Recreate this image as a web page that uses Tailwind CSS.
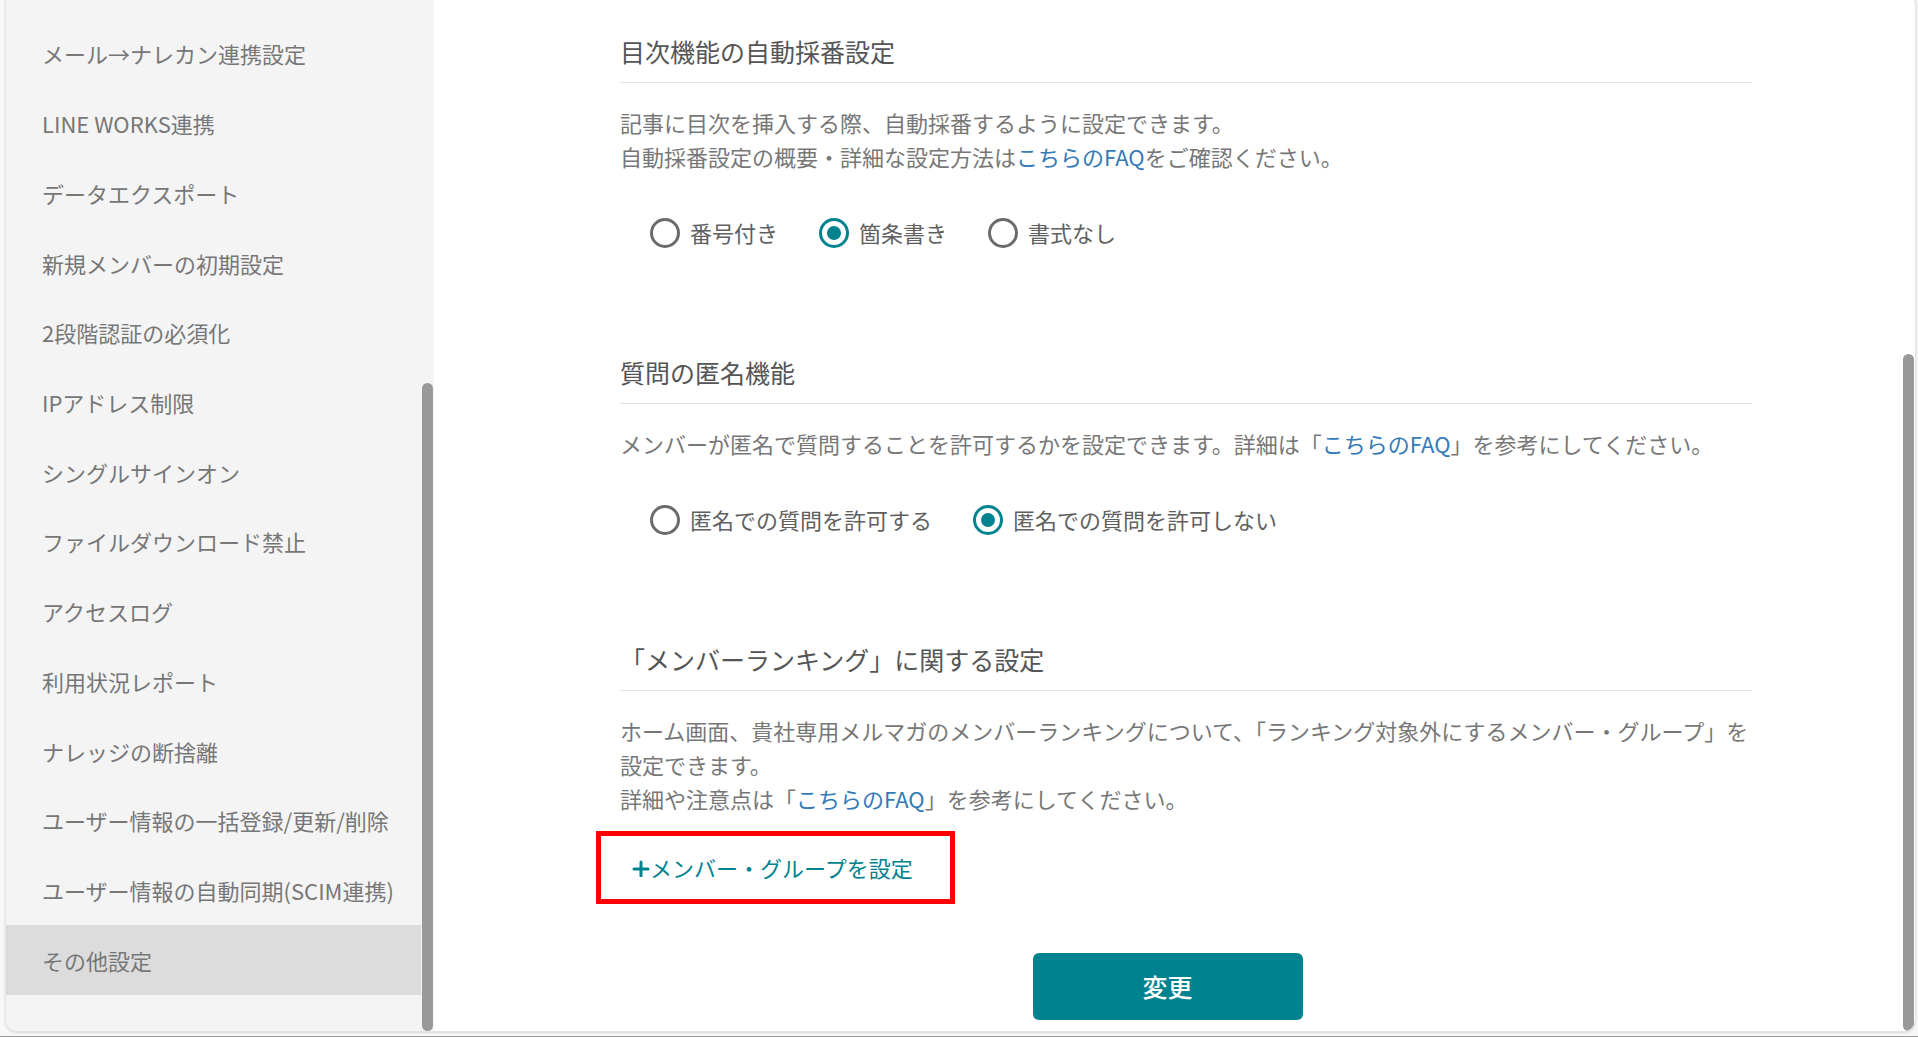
<!DOCTYPE html>
<html lang="ja">

<head>
  <meta charset="UTF-8">
  <meta name="viewport" content="width=device-width, initial-scale=1.0">
  <title>その他設定</title>
  <script src="https://cdn.jsdelivr.net/npm/@tailwindcss/browser@4"></script>
</head>

<body class="bg-[#f8f8f8] font-['Noto_Sans_CJK_JP',sans-serif] text-[22px] text-[#777]">

  <div class="min-h-screen flex flex-col overflow-hidden border-b border-[#999] pl-[5px] pr-[2px] pb-1">
    <div class="relative flex flex-1 -mt-2 bg-white border border-[#e4e4e4] rounded-xl overflow-hidden shadow-sm">

      <!-- Sidebar -->
      <nav class="relative w-[428px] shrink-0 flex bg-[#f4f4f4] pt-[26px] pb-9 pr-[13px]">
        <ul class="flex-1 flex flex-col whitespace-nowrap">
          <li class="flex-1 flex"><a href="#" class="flex-1 flex items-center pl-9">メール→ナレカン連携設定</a></li>
          <li class="flex-1 flex"><a href="#" class="flex-1 flex items-center pl-9">LINE WORKS連携</a></li>
          <li class="flex-1 flex"><a href="#" class="flex-1 flex items-center pl-9">データエクスポート</a></li>
          <li class="flex-1 flex"><a href="#" class="flex-1 flex items-center pl-9">新規メンバーの初期設定</a></li>
          <li class="flex-1 flex"><a href="#" class="flex-1 flex items-center pl-9">2段階認証の必須化</a></li>
          <li class="flex-1 flex"><a href="#" class="flex-1 flex items-center pl-9">IPアドレス制限</a></li>
          <li class="flex-1 flex"><a href="#" class="flex-1 flex items-center pl-9">シングルサインオン</a></li>
          <li class="flex-1 flex"><a href="#" class="flex-1 flex items-center pl-9">ファイルダウンロード禁止</a></li>
          <li class="flex-1 flex"><a href="#" class="flex-1 flex items-center pl-9">アクセスログ</a></li>
          <li class="flex-1 flex"><a href="#" class="flex-1 flex items-center pl-9">利用状況レポート</a></li>
          <li class="flex-1 flex"><a href="#" class="flex-1 flex items-center pl-9">ナレッジの断捨離</a></li>
          <li class="flex-1 flex"><a href="#" class="flex-1 flex items-center pl-9">ユーザー情報の一括登録/更新/削除</a></li>
          <li class="flex-1 flex"><a href="#" class="flex-1 flex items-center pl-9">ユーザー情報の自動同期(SCIM連携)</a></li>
          <li class="flex-1 flex"><a href="#" aria-current="page" class="flex-1 flex items-center pl-9 bg-[#dcdcdc]">その他設定</a></li>
        </ul>
        <div class="absolute right-px top-[390px] bottom-0 w-[11px] rounded-full bg-[#999]"></div>
      </nav>

      <!-- Settings -->
      <main class="flex-1 pt-10 pb-2">
        <form>
          <div class="pl-[186px] pr-[163px]">

            <section>
              <h2 class="text-[25px] leading-9 text-[#555] pb-[13px] border-b border-[#e2e2e2]">目次機能の自動採番設定</h2>
              <p class="mt-[22px] leading-[34px]">
                記事に目次を挿入する際、自動採番するように設定できます。<br>
                自動採番設定の概要・詳細な設定方法は<a href="#" class="text-[#337ab7]">こちらのFAQ</a>をご確認ください。
              </p>
              <div class="mt-[45px] ml-[30px] flex gap-[41px] leading-[28px] text-[#606060]">
                <label class="flex items-start gap-[10px]">
                  <input type="radio" name="numbering" class="appearance-none size-[30px] rounded-full border-3 border-[#6b6b6b] grid place-items-center checked:border-[#00838f] checked:before:size-[14px] checked:before:rounded-full checked:before:bg-[#00838f]">番号付き
                </label>
                <label class="flex items-start gap-[10px]">
                  <input type="radio" name="numbering" checked class="appearance-none size-[30px] rounded-full border-3 border-[#6b6b6b] grid place-items-center checked:border-[#00838f] checked:before:size-[14px] checked:before:rounded-full checked:before:bg-[#00838f]">箇条書き
                </label>
                <label class="flex items-start gap-[10px]">
                  <input type="radio" name="numbering" class="appearance-none size-[30px] rounded-full border-3 border-[#6b6b6b] grid place-items-center checked:border-[#00838f] checked:before:size-[14px] checked:before:rounded-full checked:before:bg-[#00838f]">書式なし
                </label>
              </div>
            </section>

            <section class="mt-[106px]">
              <h2 class="text-[25px] leading-9 text-[#555] pb-[13px] border-b border-[#e2e2e2]">質問の匿名機能</h2>
              <p class="mt-[22px] leading-[34px] whitespace-nowrap">メンバーが匿名で質問することを許可するかを設定できます。詳細は「<a href="#" class="text-[#337ab7]">こちらのFAQ</a>」を参考にしてください。</p>
              <div class="mt-[45px] ml-[30px] flex gap-[41px] leading-[28px] text-[#606060]">
                <label class="flex items-start gap-[10px]">
                  <input type="radio" name="anonymous" class="appearance-none size-[30px] rounded-full border-3 border-[#6b6b6b] grid place-items-center checked:border-[#00838f] checked:before:size-[14px] checked:before:rounded-full checked:before:bg-[#00838f]">匿名での質問を許可する
                </label>
                <label class="flex items-start gap-[10px]">
                  <input type="radio" name="anonymous" checked class="appearance-none size-[30px] rounded-full border-3 border-[#6b6b6b] grid place-items-center checked:border-[#00838f] checked:before:size-[14px] checked:before:rounded-full checked:before:bg-[#00838f]">匿名での質問を許可しない
                </label>
              </div>
            </section>

            <section class="mt-[106px]">
              <h2 class="text-[25px] leading-9 text-[#555] pb-[13px] border-b border-[#e2e2e2]">「メンバーランキング」に関する設定</h2>
              <p class="mt-[22px] leading-[34px] whitespace-nowrap">
                ホーム画面、貴社専用メルマガのメンバーランキングについて、「ランキング対象外にするメンバー・グループ」を<br>
                設定できます。<br>
                詳細や注意点は「<a href="#" class="text-[#337ab7]">こちらのFAQ</a>」を参考にしてください。
              </p>
              <div class="mt-4 -ml-6 w-[359px] h-[73px] border-5 border-[#f00] flex items-center pl-[31px]">
                <button type="button" class="flex items-center text-[#00838f] whitespace-nowrap">
                  <svg class="size-[18px]" viewBox="0 0 18 18" fill="none" stroke="currentColor" stroke-width="3" stroke-linecap="round">
                    <path d="M9 3v14M2 10h14" />
                  </svg>メンバー・グループを設定
                </button>
              </div>
            </section>
          </div>

          <div class="mt-[49px] pr-[14px] flex justify-center">
            <button type="submit" class="w-[270px] h-[67px] rounded-md bg-[#00838f] text-white text-[25px] font-medium">変更</button>
          </div>
        </form>
      </main>

      <div class="absolute right-px top-[361px] bottom-0 w-[11px] rounded-full bg-[#999]"></div>
    </div>
  </div>

</body>

</html>
